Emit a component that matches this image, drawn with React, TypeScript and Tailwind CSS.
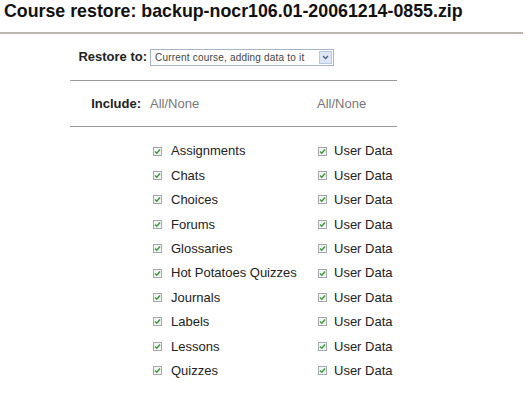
const modules = [
  "Assignments",
  "Chats",
  "Choices",
  "Forums",
  "Glossaries",
  "Hot Potatoes Quizzes",
  "Journals",
  "Labels",
  "Lessons",
  "Quizzes",
];

function Check() {
  return (
    <span className="inline-flex h-[9px] w-[9px] items-center justify-center border border-[#a3a8ae] bg-[#f4f6f6]">
      <svg width="7" height="7" viewBox="0 0 7 7">
        <path d="M1 3.5 L2.8 5.3 L6 1.5" fill="none" stroke="#3a9a3a" strokeWidth="1.4" />
      </svg>
    </span>
  );
}

function App() {
  return (
    <div className="h-[409px] w-[528px] bg-white font-['Liberation_Sans',Arial,sans-serif] text-[#222]">
      <h2 className="pl-[4px] pt-[1px] text-[17.8px] font-bold leading-[20px] text-[#111]">
        Course restore: backup-nocr106.01-20061214-0855.zip
      </h2>
      <div className="mt-[11px] mr-[5px] h-[2px] bg-[#b9b6ae]" />

      <div className="ml-[70px] w-[327px]">
        <div className="flex h-[46px] items-center">
          <span className="w-[77px] text-right text-[13px] font-bold">Restore to:</span>
          <div className="ml-[3px] flex h-[17px] w-[184px] items-center border border-[#a5b5c8] bg-white">
            <span className="flex-1 pl-[4px] text-[10px] tracking-[0.2px] text-[#444]">
              Current course, adding data to it
            </span>
            <span className="mr-[1px] flex h-[13px] w-[13px] items-center justify-center border border-[#b8c8e0] bg-[#dde7f7]">
              <svg width="7" height="5" viewBox="0 0 7 5">
                <path d="M1 1 L3.5 3.5 L6 1" fill="none" stroke="#4d6185" strokeWidth="1.3" />
              </svg>
            </span>
          </div>
        </div>
        <div className="h-px bg-[#9a9a9a]" />

        <div className="flex h-[45px] items-center text-[13px]">
          <span className="w-[71px] text-right font-bold">Include:</span>
          <span className="ml-[9px] w-[167px] text-[#777]">All/None</span>
          <span className="text-[#777]">All/None</span>
        </div>
        <div className="h-px bg-[#9a9a9a]" />

        <div className="pt-[12px]">
          {modules.map((m) => (
            <div key={m} className="flex h-[24.4px] items-center text-[13px]">
              <div className="ml-[83px] flex w-[165px] items-center">
                <Check />
                <span className="ml-[9px]">{m}</span>
              </div>
              <div className="flex items-center">
                <Check />
                <span className="ml-[7px]">User Data</span>
              </div>
            </div>
          ))}
        </div>
      </div>
    </div>
  );
}

export default App;
